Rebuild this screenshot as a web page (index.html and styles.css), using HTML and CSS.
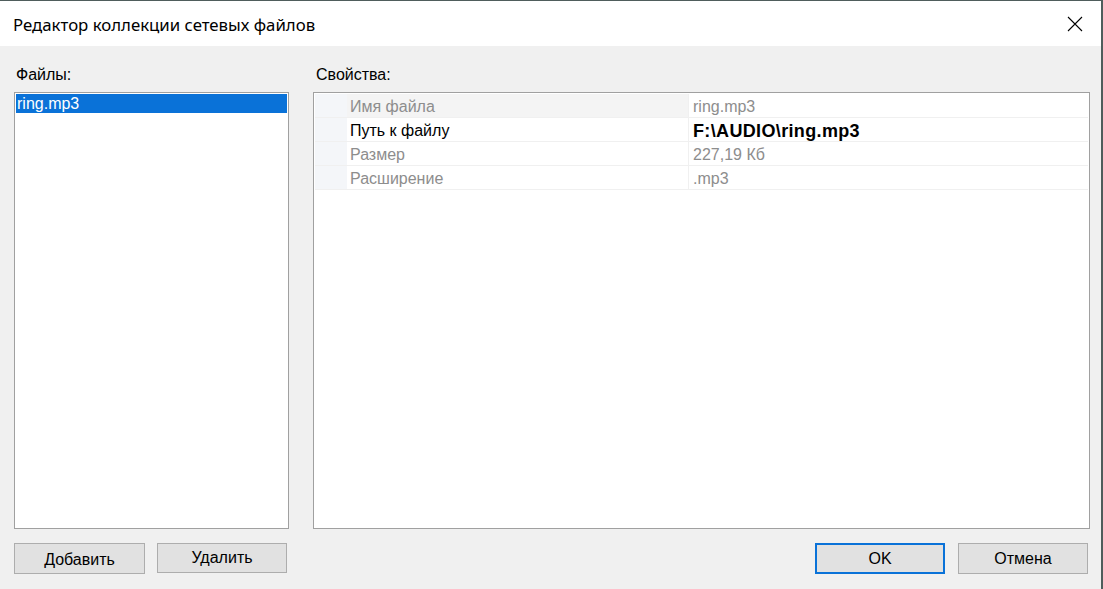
FILE: index.html
```html
<!DOCTYPE html>
<html lang="ru">
<head>
<meta charset="utf-8">
<title>Редактор коллекции сетевых файлов</title>
<link rel="stylesheet" href="styles.css">
</head>
<body>
<div class="window">
  <div class="titlebar">
    <span class="title">Редактор коллекции сетевых файлов</span>
    <svg class="close" width="16" height="16" viewBox="0 0 16 16"><path d="M1 1 L15 15 M15 1 L1 15" stroke="#000" stroke-width="1.1" fill="none"/></svg>
  </div>
  <div class="content">
    <div class="panes">
      <div class="pane pane-left">
        <div class="label">Файлы:</div>
        <div class="listbox">
          <div class="list-item selected">ring.mp3</div>
        </div>
      </div>
      <div class="pane pane-right">
        <div class="label">Свойства:</div>
        <div class="grid">
          <div class="row first">
            <div class="margin"></div>
            <div class="name ro">Имя файла</div>
            <div class="value ro">ring.mp3</div>
          </div>
          <div class="row">
            <div class="margin"></div>
            <div class="name">Путь к файлу</div>
            <div class="value bold">F:\AUDIO\ring.mp3</div>
          </div>
          <div class="row">
            <div class="margin"></div>
            <div class="name ro">Размер</div>
            <div class="value ro">227,19 Кб</div>
          </div>
          <div class="row">
            <div class="margin"></div>
            <div class="name ro">Расширение</div>
            <div class="value ro">.mp3</div>
          </div>
        </div>
      </div>
    </div>
    <div class="buttons">
      <div class="btn-group">
        <button class="btn btn-add">Добавить</button>
        <button class="btn btn-del">Удалить</button>
      </div>
      <div class="btn-group">
        <button class="btn btn-ok">OK</button>
        <button class="btn btn-cancel">Отмена</button>
      </div>
    </div>
  </div>
</div>
</body>
</html>
```

FILE: styles.css
```css
html, body {
  margin: 0;
  padding: 0;
}
body {
  width: 1103px;
  height: 589px;
  overflow: hidden;
  background: #f0f0f0;
  font-family: "Liberation Sans", Arial, sans-serif;
  font-size: 16px;
  color: #000;
}
.window {
  box-sizing: border-box;
  width: 1103px;
  height: 589px;
  display: flex;
  flex-direction: column;
  border-top: 1px solid #4f5d5c;
  border-right: 2px solid #4f5d5c;
  background: #f0f0f0;
}
.titlebar {
  height: 45px;
  flex: none;
  background: #fff;
  display: flex;
  align-items: center;
  justify-content: space-between;
  padding: 0 18px 0 13px;
}
.title {
  font-family: "Noto Sans", "Open Sans", sans-serif;
  font-size: 16.8px;
  color: #000;
  position: relative;
  top: 1px;
}
.close {
  display: block;
  position: relative;
  top: 0;
}
.content {
  flex: 1;
  display: flex;
  flex-direction: column;
  padding: 20px 11px 0 14px;
}
.panes {
  display: flex;
  gap: 24px;
}
.pane {
  display: flex;
  flex-direction: column;
  gap: 8px;
}
.pane-left {
  width: 275px;
}
.pane-right {
  flex: 1;
}
.label {
  height: 18px;
  line-height: 18px;
  padding-left: 2px;
  color: #000;
}
.pane-right .label {
  padding-left: 3px;
}
.listbox {
  box-sizing: border-box;
  height: 437px;
  background: #fff;
  border: 1px solid #a0a0a0;
  padding: 1px;
}
.list-item {
  height: 19px;
  line-height: 20px;
  padding-left: 1px;
}
.list-item.selected {
  background: #0a72d8;
  color: #fff;
}
.grid {
  box-sizing: border-box;
  height: 437px;
  background: #fff;
  border: 1px solid #a0a0a0;
  padding: 1px;
}
.row {
  display: flex;
  height: 24px;
  border-bottom: 1px solid #f0f0f0;
  box-sizing: border-box;
}
.margin {
  width: 32px;
  flex: none;
  background: #f4f6f9;
}
.name {
  width: 342px;
  flex: none;
  line-height: 26px;
  padding-left: 3px;
  box-sizing: border-box;
  border-right: 1px solid #f0f0f0;
}
.row.first .name {
  background: #f4f4f4;
}
.value {
  flex: 1;
  line-height: 26px;
  padding-left: 4px;
}
.ro {
  color: #8d8d8d;
}
.bold {
  font-weight: bold;
  color: #000;
  font-size: 18px;
  letter-spacing: 0.35px;
}
.buttons {
  display: flex;
  justify-content: space-between;
  margin-top: 14px;
  padding-right: 2px;
}
.btn-group {
  display: flex;
  gap: 12px;
}
.btn {
  box-sizing: border-box;
  width: 130px;
  height: 31px;
  background: #e1e1e1;
  border: 1px solid #adadad;
  font-family: "Liberation Sans", Arial, sans-serif;
  font-size: 16px;
  color: #000;
  padding: 0;
  margin: 0;
}
.btn-add {
  width: 131px;
  padding-top: 2px;
}
.btn-del {
  height: 30px;
}
.btn-ok {
  border: 2px solid #0a72d8;
}
.btn-group + .btn-group {
  gap: 13px;
}
```
